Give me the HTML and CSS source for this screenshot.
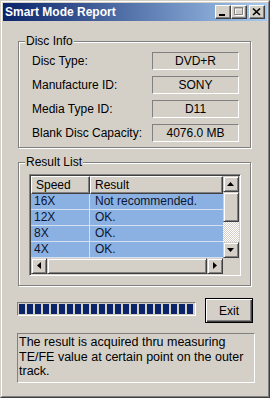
FILE: index.html
```html
<!DOCTYPE html>
<html lang="en">
<head>
    <meta charset="UTF-8">
    <meta name="viewport" content="width=device-width, initial-scale=1.0">
    <title>Smart Mode Report</title>
    <link rel="stylesheet" href="styles.css">
</head>
<body>
    <div class="window">
        <div class="frame">
            <div class="caption">
                <span class="caption-title">Smart Mode Report</span>
                <div class="caption-btns">
                    <div class="cbtn"><svg width="12" height="10" viewBox="0 0 12 10"><rect x="2" y="7" width="6" height="2" fill="#000"/></svg></div>
                    <div class="cbtn"><svg width="12" height="10" viewBox="0 0 12 10"><path d="M2.5 1.5h8v7h-8z M2 2h9" fill="none" stroke="#fff"/><path d="M1.5 0.5h8v7h-8z M1 1h9" fill="none" stroke="#808080"/></svg></div>
                    <div class="cbtn close"><svg width="12" height="10" viewBox="0 0 12 10"><path d="M2 1.5l7 6.5M9 1.5l-7 6.5" stroke="#000" stroke-width="1.7"/></svg></div>
                </div>
            </div>

            <div class="client">
                <div class="group">
                    <div class="legend">Disc Info</div>
                    <div class="info">
                        <span class="lbl">Disc Type:</span><span class="val">DVD+R</span>
                        <span class="lbl">Manufacture ID:</span><span class="val">SONY</span>
                        <span class="lbl">Media Type ID:</span><span class="val">D11</span>
                        <span class="lbl">Blank Disc Capacity:</span><span class="val">4076.0 MB</span>
                    </div>
                </div>

                <div class="group results">
                    <div class="legend">Result List</div>
                    <div class="listview">
                        <div class="lv-main">
                            <div class="lv-head"><span class="c1">Speed</span><span class="c2">Result</span></div>
                            <div class="lv-row"><span class="c1">16X</span><span class="c2">Not recommended.</span></div>
                            <div class="lv-row"><span class="c1">12X</span><span class="c2">OK.</span></div>
                            <div class="lv-row"><span class="c1">8X</span><span class="c2">OK.</span></div>
                            <div class="lv-row"><span class="c1">4X</span><span class="c2">OK.</span></div>
                        </div>
                        <div class="vscroll">
                            <div class="sbtn"><svg width="12" height="12" viewBox="0 0 12 12"><path d="M2 8h7l-3.5-4z" fill="#000"/></svg></div>
                            <div class="thumb"></div>
                            <div class="track"></div>
                            <div class="sbtn"><svg width="12" height="12" viewBox="0 0 12 12"><path d="M2 4h7l-3.5 4z" fill="#000"/></svg></div>
                        </div>
                        <div class="hscroll">
                            <div class="sbtn"><svg width="12" height="12" viewBox="0 0 12 12"><path d="M8 2v7l-4-3.5z" fill="#000"/></svg></div>
                            <div class="thumb"></div>
                            <div class="sbtn"><svg width="12" height="12" viewBox="0 0 12 12"><path d="M4 2v7l4-3.5z" fill="#000"/></svg></div>
                        </div>
                        <div class="corner"></div>
                    </div>
                </div>

                <div class="actions">
                    <div class="progress"><div class="bar"></div></div>
                    <button class="btn-exit">Exit</button>
                </div>

                <div class="note">The result is acquired thru measuring TE/FE value at certain point on the outer track.</div>
            </div>
        </div>
    </div>
</body>
</html>
```

FILE: styles.css
```css
*{margin:0; padding:0; box-sizing:border-box}
body{width:270px; height:398px; overflow:hidden; background:#D4D0C8; font:12px "Liberation Sans", Arial, sans-serif; color:#000}

/* window frame */
.window{width:270px; height:398px; border:1px solid; border-color:#D4D0C8 #404040 #404040 #D4D0C8}
.frame{height:100%; border:1px solid; border-color:#fff #808080 #808080 #fff; padding:1px; display:flex; flex-direction:column}

.caption{height:18px; flex-shrink:0; display:flex; align-items:center; justify-content:space-between; padding:0 2px; background:linear-gradient(to right, #0A246A, #A6CAF0)}
.caption-title{color:#fff; font-weight:bold; font-size:12px; white-space:nowrap}
.caption-btns{display:flex}
.cbtn{width:16px; height:14px; display:flex; align-items:center; justify-content:center; background:#D4D0C8; border:1px solid; border-color:#fff #404040 #404040 #fff; box-shadow:inset -1px -1px 0 #808080}
.cbtn.close{margin-left:2px}

.client{flex:1; padding:20px 0 0 14px}

/* group boxes */
.group{width:233px; margin-left:1px; border:1px solid #808080; box-shadow:1px 1px 0 #fff, inset 1px 1px 0 #fff}
.group.results{margin-top:14px}
.legend{display:block; width:max-content; height:14px; margin:-8px 0 0 6px; padding:0 1px; line-height:14px; background:#D4D0C8}

.info{display:grid; grid-template-columns:120px 87px; grid-auto-rows:18px; row-gap:6px; margin:4px 11px 5px 13px}
.lbl{line-height:19px; white-space:nowrap}
.val{text-align:center; line-height:16px; border:1px solid; border-color:#808080 #fff #fff #808080}

/* list view */
.listview{display:grid; grid-template-columns:192px 16px; grid-template-rows:82px 16px; width:212px; margin:5px 9px 9px 10px; border:1px solid; border-color:#808080 #fff #fff #808080; box-shadow:inset 1px 1px 0 #404040, inset -1px -1px 0 #D4D0C8; padding:1px}
.lv-main{background:#fff; overflow:hidden}
.lv-head{display:flex; height:18px}
.lv-head span{height:18px; line-height:16px; padding-left:4px; background:#D4D0C8; border:1px solid; border-color:#fff #404040 #404040 #fff; box-shadow:inset -1px -1px 0 #808080}
.lv-head .c1{width:59px}
.lv-head .c2{width:133px}
.lv-row{display:flex; height:16px; background:#8BB1E2; border-bottom:1px solid #D3E0F1; color:#0B1530}
.lv-row span{line-height:15px; white-space:nowrap}
.lv-row .c1{width:59px; padding-left:3px; border-right:1px solid #D3E0F1}
.lv-row .c2{padding-left:5px}

.vscroll{display:flex; flex-direction:column}
.hscroll{display:flex}
.sbtn{width:16px; height:16px; flex-shrink:0; display:flex; align-items:center; justify-content:center; background:#D4D0C8; border:1px solid; border-color:#D4D0C8 #404040 #404040 #D4D0C8; box-shadow:inset 1px 1px 0 #fff, inset -1px -1px 0 #808080}
.thumb{background:#D4D0C8; border:1px solid; border-color:#D4D0C8 #404040 #404040 #D4D0C8; box-shadow:inset 1px 1px 0 #fff, inset -1px -1px 0 #808080}
.vscroll .thumb{height:30px}
.hscroll .thumb{flex:1}
.track{height:20px; background:repeating-conic-gradient(#fff 0 25%, #D4D0C8 0 50%) 0 0/2px 2px}
.corner{background:#D4D0C8}

/* progress + exit */
.actions{display:flex; align-items:flex-start; gap:9px; margin-top:12px}
.progress{width:179px; height:14px; margin-top:4px; border:1px solid; border-color:#808080 #fff #fff #808080; padding:1px}
.bar{height:100%; background:repeating-linear-gradient(to right, #0A246A 0 6px, transparent 6px 8px)}
.btn-exit{width:48px; height:25px; font:12px "Liberation Sans", Arial, sans-serif; color:#000; background:#D4D0C8; border:1px solid #000; box-shadow:inset 1px 1px 0 #fff, inset -1px -1px 0 #404040, inset -2px -2px 0 #808080}

.note{width:238px; height:50px; margin-top:10px; padding:1px 0 0 1px; font-size:12.5px; line-height:14.5px; border:1px solid; border-color:#808080 #fff #fff #808080}
```
